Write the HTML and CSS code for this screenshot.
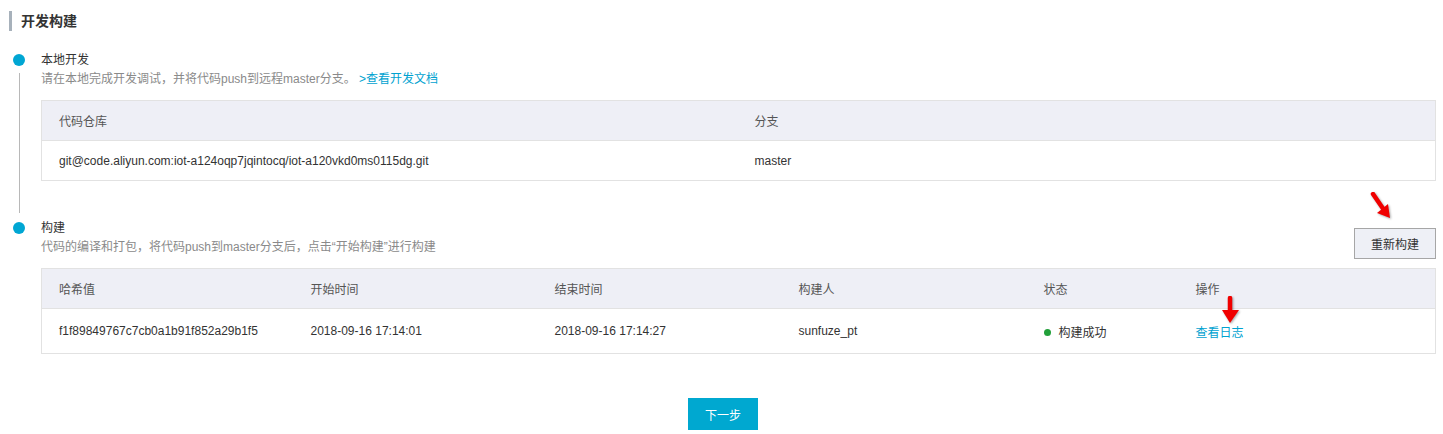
FILE: index.html
```html
<!DOCTYPE html>
<html lang="zh-CN">
<head>
  <meta charset="UTF-8">
  <meta name="viewport" content="width=device-width, initial-scale=1.0">
  <title>开发构建</title>
  <link rel="stylesheet" href="styles.css">
</head>
<body>
  <div id="page">
    <h2 class="page-title">开发构建</h2>

    <div class="steps">
      <div class="step step-line">
        <div class="step-axis">
          <span class="step-dot"></span>
          <span class="step-bar"></span>
        </div>
        <div class="step-body">
          <div class="step-head">
            <div>
              <p class="step-title">本地开发</p>
              <p class="step-desc">请在本地完成开发调试，并将代码push到远程master分支。 <a class="link" href="#">&gt;查看开发文档</a></p>
            </div>
          </div>
          <table class="grid">
            <colgroup>
              <col style="width: 696px">
              <col>
            </colgroup>
            <thead>
              <tr><th>代码仓库</th><th>分支</th></tr>
            </thead>
            <tbody>
              <tr><td>git@code.aliyun.com:iot-a124oqp7jqintocq/iot-a120vkd0ms0115dg.git</td><td>master</td></tr>
            </tbody>
          </table>
        </div>
      </div>

      <div class="step">
        <div class="step-axis">
          <span class="step-dot"></span>
        </div>
        <div class="step-body">
          <div class="step-head with-btn">
            <div>
              <p class="step-title">构建</p>
              <p class="step-desc">代码的编译和打包，将代码push到master分支后，点击“开始构建”进行构建</p>
            </div>
            <button class="btn">重新构建</button>
          </div>
          <table class="grid build-table">
            <colgroup>
              <col style="width: 252px">
              <col style="width: 244px">
              <col style="width: 244px">
              <col style="width: 245px">
              <col style="width: 152px">
              <col>
            </colgroup>
            <thead>
              <tr><th>哈希值</th><th>开始时间</th><th>结束时间</th><th>构建人</th><th>状态</th><th>操作</th></tr>
            </thead>
            <tbody>
              <tr>
                <td>f1f89849767c7cb0a1b91f852a29b1f5</td>
                <td>2018-09-16 17:14:01</td>
                <td>2018-09-16 17:14:27</td>
                <td>sunfuze_pt</td>
                <td><span class="status-dot"></span>构建成功</td>
                <td><a class="link" href="#">查看日志</a></td>
              </tr>
            </tbody>
          </table>
        </div>
      </div>
    </div>

    <div class="footer">
      <button class="btn-primary">下一步</button>
    </div>

    <!-- annotation arrows -->
    <svg class="mark mark-1" width="24" height="30" viewBox="0 0 24 30">
      <path d="M3 2 L14 18" stroke="#f00000" stroke-width="4.5" stroke-linecap="round" fill="none"/>
      <path d="M7 21 L20 26 L18 12 Z" fill="#f00000"/>
    </svg>
    <svg class="mark mark-2" width="20" height="30" viewBox="0 0 20 30">
      <path d="M9 2 L9 17" stroke="#f00000" stroke-width="4.5" stroke-linecap="round" fill="none"/>
      <path d="M1 14 L18 14 L9 27 Z" fill="#f00000"/>
    </svg>
  </div>
</body>
</html>
```

FILE: styles.css
```css
body {
  margin: 0;
  font-family: "Liberation Sans", Arial, "Noto Sans CJK SC", sans-serif;
  font-size: 12px;
  color: #333;
  background-color: #fff;
}
#page {
  position: relative;
  padding: 11px 7px 0 0;
}
.page-title {
  margin: 0 0 20px 9px;
  padding-left: 9px;
  border-left: 3px solid #a7b1bb;
  height: 20px;
  line-height: 20px;
  font-size: 14px;
  font-weight: bold;
  color: #333;
}
.step {
  display: flex;
}
.step-line {
  padding-bottom: 38px;
}
.step-axis {
  width: 41px;
  flex-shrink: 0;
  display: flex;
  flex-direction: column;
  align-items: center;
  padding-right: 3px;
  box-sizing: border-box;
  margin-bottom: -32px;
}
.step-dot {
  width: 12px;
  height: 12px;
  margin-top: 3px;
  border-radius: 50%;
  background-color: #00a6d3;
}
.step-bar {
  flex: 1;
  width: 1px;
  margin-top: 7px;
  background-color: #b8b8b8;
}
.step-body {
  flex: 1;
}
.step-head {
  display: flex;
  justify-content: space-between;
  margin-bottom: 12px;
}
.step-head.with-btn {
  margin-bottom: 9px;
}
.step-title {
  margin: 0;
  line-height: 18px;
  color: #333;
}
.step-desc {
  margin: 1px 0 0 0;
  line-height: 18px;
  color: #8a8a8a;
}
.link {
  color: #00a2d0;
  text-decoration: none;
}
.btn {
  margin-top: 9px;
  width: 82px;
  height: 31px;
  border: 1px solid #a6a6a6;
  background-color: #eef0f6;
  color: #333;
  font-family: inherit;
  font-size: 12px;
  cursor: pointer;
}
.grid {
  width: 100%;
  border-collapse: collapse;
  table-layout: fixed;
  border: 1px solid #e2e2e2;
}
.grid th {
  height: 39px;
  padding: 0 17px;
  text-align: left;
  font-weight: normal;
  color: #555;
  background-color: #eeeff6;
  border-bottom: 1px solid #e2e2e2;
}
.grid td {
  height: 39px;
  padding: 0 17px;
  color: #333;
}
.build-table td {
  height: 44px;
}
.status-dot {
  display: inline-block;
  width: 7px;
  height: 7px;
  margin: 0 8px 0 0;
  border-radius: 50%;
  background-color: #22a03a;
  vertical-align: 1px;
}
.footer {
  margin-top: 44px;
  padding-left: 10px;
  text-align: center;
}
.btn-primary {
  width: 70px;
  height: 32px;
  border: none;
  background-color: #00a8d0;
  color: #fff;
  font-family: inherit;
  font-size: 12px;
  cursor: pointer;
}
.mark {
  position: absolute;
  filter: drop-shadow(1px 1px 1px rgba(0, 0, 0, 0.35));
}
.mark-1 {
  left: 1370px;
  top: 192px;
}
.mark-2 {
  left: 1221px;
  top: 296px;
}
```
